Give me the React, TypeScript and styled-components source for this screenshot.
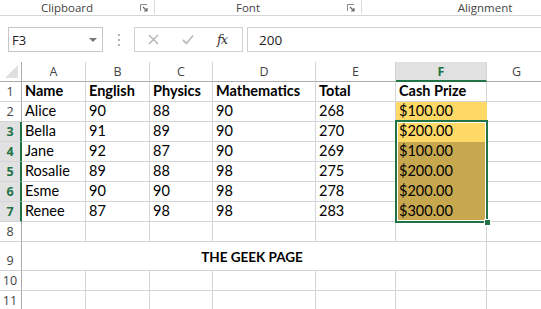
import React from 'react';
import styled, { createGlobalStyle } from 'styled-components';

const GREEN = '#217346';
const GRID = '#d4d4d4';
const HEAD_LINE = '#ababab';

const Global = createGlobalStyle`
  html, body { margin: 0; padding: 0; background: #fff; overflow: hidden; }
  #root { width: 541px; height: 309px; overflow: hidden; }
`;

const Page = styled.div`
  width: 541px;
  height: 309px;
  overflow: hidden;
  display: flex;
  flex-direction: column;
  background: #fff;
  font-family: "Open Sans", "Noto Sans", sans-serif;
`;

/* ---------- Ribbon ---------- */
const Ribbon = styled.div`
  display: flex;
  height: 16px;
  flex-shrink: 0;
  box-sizing: border-box;
  border-bottom: 1px solid #d5d5d5;
`;

const Group = styled.div<{ $w: number }>`
  width: ${(p) => p.$w}px;
  flex-shrink: 0;
  display: flex;
  height: 14px;
  box-sizing: border-box;
  border-right: 1px solid #dadada;
`;

const GroupLabel = styled.div`
  flex: 1;
  text-align: center;
  font-size: 11.5px;
  line-height: 15px;
  color: #444;
  margin-top: 0px;
`;

const Launcher = styled.div`
  width: 20px;
  display: flex;
  align-items: center;
  justify-content: center;
  padding-top: 2px;
`;

const LauncherIcon = () => (
  <svg width="8" height="8" viewBox="0 0 8 8">
    <path d="M0.5 7V0.5H7" fill="none" stroke="#8a8a8a" strokeWidth="1" />
    <path d="M3 3L7 7M4 7H7V4" fill="none" stroke="#6a6a6a" strokeWidth="1.2" />
  </svg>
);

/* ---------- Formula bar ---------- */
const FormulaBar = styled.div`
  display: flex;
  align-items: stretch;
  height: 25px;
  flex-shrink: 0;
  margin: 11px 0 10px 8px;
`;

const NameBox = styled.div`
  width: 95px;
  box-sizing: border-box;
  border: 1px solid #c6c6c6;
  display: flex;
  align-items: center;
  justify-content: space-between;
  padding: 0 5px 0 3px;
  font-size: 13px;
  color: #222;
`;

const DropArrow = styled.span`
  width: 0;
  height: 0;
  border-left: 4px solid transparent;
  border-right: 4px solid transparent;
  border-top: 4px solid #777;
`;

const Dots = styled.div`
  width: 31px;
  display: flex;
  flex-direction: column;
  align-items: center;
  justify-content: center;
  gap: 3px;
`;

const Dot = styled.span`
  width: 2px;
  height: 2px;
  background: #b4b4b4;
`;

const FxBox = styled.div`
  width: 109px;
  box-sizing: border-box;
  border: 1px solid #d0d0d0;
  display: flex;
  align-items: center;
  padding-left: 13px;
  gap: 23px;
`;

const Fx = styled.span`
  font-family: "DejaVu Serif", "Liberation Serif", serif;
  font-style: italic;
  font-size: 13px;
  color: #333;
  letter-spacing: -1px;
`;

const FormulaInput = styled.div`
  flex: 1;
  margin-left: 4px;
  box-sizing: border-box;
  border: 1px solid #d0d0d0;
  border-right: none;
  display: flex;
  align-items: center;
  padding-left: 11px;
  font-size: 13.5px;
  color: #222;
`;

const XIcon = () => (
  <svg width="11" height="11" viewBox="0 0 11 11">
    <path d="M1 1L10 10M10 1L1 10" stroke="#b0b0b0" strokeWidth="1.3" />
  </svg>
);

const CheckIcon = () => (
  <svg width="12" height="11" viewBox="0 0 12 11">
    <path d="M1 6L4.5 9.5L11 1.5" fill="none" stroke="#bcbcbc" strokeWidth="1.8" />
  </svg>
);

/* ---------- Sheet ---------- */
const Sheet = styled.div`
  position: relative;
  display: grid;
  grid-template-columns: 22px 64px 64px 63px 103px 80px 91px 60px;
  grid-template-rows: 20px repeat(8, 20px) 29px 20px 20px;
  flex-shrink: 0;
`;

const Corner = styled.div`
  position: relative;
  box-sizing: border-box;
  border-right: 1px solid ${HEAD_LINE};
  border-bottom: 1px solid ${HEAD_LINE};
  &::after {
    content: '';
    position: absolute;
    right: 3px;
    bottom: 3px;
    width: 13px;
    height: 13px;
    background: #dfdfdf;
    clip-path: polygon(100% 0, 100% 100%, 0 100%);
  }
`;

const ColHead = styled.div<{ $sel?: boolean }>`
  box-sizing: border-box;
  border-right: 1px solid ${GRID};
  border-bottom: ${(p) => (p.$sel ? `2px solid ${GREEN}` : `1px solid ${HEAD_LINE}`)};
  background: ${(p) => (p.$sel ? '#e1e1e1' : '#fff')};
  color: ${(p) => (p.$sel ? GREEN : '#444')};
  font-weight: ${(p) => (p.$sel ? 700 : 400)};
  font-size: 12.5px;
  display: flex;
  align-items: center;
  justify-content: center;
  padding-top: ${(p) => (p.$sel ? 1 : 0)}px;
`;

const RowHead = styled.div<{ $sel?: boolean }>`
  box-sizing: border-box;
  border-right: ${(p) => (p.$sel ? `2px solid ${GREEN}` : `1px solid ${HEAD_LINE}`)};
  border-bottom: 1px solid ${GRID};
  background: ${(p) => (p.$sel ? '#e1e1e1' : '#fff')};
  color: ${(p) => (p.$sel ? GREEN : '#444')};
  font-weight: ${(p) => (p.$sel ? 700 : 400)};
  font-size: 12.5px;
  display: flex;
  align-items: flex-end;
  justify-content: center;
  padding: 0 ${(p) => (p.$sel ? 0 : 1)}px 1px 0;
  line-height: 17px;
`;

const Cell = styled.div<{ $fill?: string; $bold?: boolean }>`
  box-sizing: border-box;
  border-right: 1px solid ${(p) => p.$fill || GRID};
  border-bottom: 1px solid ${(p) => p.$fill || GRID};
  background: ${(p) => p.$fill || '#fff'};
  font-family: Lato, "Open Sans", sans-serif;
  font-size: 14.5px;
  font-weight: ${(p) => (p.$bold ? 700 : 400)};
  color: #000;
  display: flex;
  align-items: flex-end;
  padding: 0 0 1px 3px;
  line-height: 18px;
  white-space: nowrap;
  overflow: hidden;
`;

const MergedCell = styled.div`
  grid-column: 2 / 8;
  box-sizing: border-box;
  border-right: 1px solid ${GRID};
  border-bottom: 1px solid ${GRID};
  font-family: Lato, "Open Sans", sans-serif;
  font-size: 13.5px;
  font-weight: 700;
  display: flex;
  align-items: center;
  justify-content: center;
  padding: 2px 4px 0 0;
`;

const Selection = styled.div`
  position: absolute;
  left: 395px;
  top: 58px;
  width: 93px;
  height: 103px;
  box-sizing: border-box;
  border: 2px solid ${GREEN};
  box-shadow: inset 0 0 0 1px #fff;
  pointer-events: none;
`;

const FillHandle = styled.div`
  position: absolute;
  left: 484px;
  top: 157px;
  width: 7px;
  height: 7px;
  box-sizing: border-box;
  background: ${GREEN};
  border: 1px solid #fff;
`;

const LIGHT = '#ffd966';
const DARK = '#c8a84f';

const cols = ['A', 'B', 'C', 'D', 'E', 'F', 'G'];

const rows: string[][] = [
  ['Name', 'English', 'Physics', 'Mathematics', 'Total', 'Cash Prize'],
  ['Alice', '90', '88', '90', '268', '$100.00'],
  ['Bella', '91', '89', '90', '270', '$200.00'],
  ['Jane', '92', '87', '90', '269', '$100.00'],
  ['Rosalie', '89', '88', '98', '275', '$200.00'],
  ['Esme', '90', '90', '98', '278', '$200.00'],
  ['Renee', '87', '98', '98', '283', '$300.00'],
];

const fillFor = (r: number, c: number): string | undefined => {
  if (c !== 5) return undefined;
  if (r === 2 || r === 3) return LIGHT;
  if (r >= 4 && r <= 7) return DARK;
  return undefined;
};

export default function App() {
  return (
    <Page>
      <Global />
      <Ribbon>
        <Group $w={155}>
          <GroupLabel>Clipboard</GroupLabel>
          <Launcher>
            <LauncherIcon />
          </Launcher>
        </Group>
        <Group $w={207}>
          <GroupLabel>Font</GroupLabel>
          <Launcher>
            <LauncherIcon />
          </Launcher>
        </Group>
        <Group $w={247}>
          <GroupLabel>Alignment</GroupLabel>
        </Group>
      </Ribbon>

      <FormulaBar>
        <NameBox>
          <span>F3</span>
          <DropArrow />
        </NameBox>
        <Dots>
          <Dot />
          <Dot />
          <Dot />
        </Dots>
        <FxBox>
          <XIcon />
          <CheckIcon />
          <Fx>fx</Fx>
        </FxBox>
        <FormulaInput>200</FormulaInput>
      </FormulaBar>

      <Sheet>
        <Corner />
        {cols.map((c) => (
          <ColHead key={c} $sel={c === 'F'}>
            {c}
          </ColHead>
        ))}
        {Array.from({ length: 11 }, (_, i) => {
          const r = i + 1;
          const sel = r >= 3 && r <= 7;
          if (r === 9) {
            return (
              <React.Fragment key={r}>
                <RowHead>{r}</RowHead>
                <MergedCell>THE GEEK PAGE</MergedCell>
                <Cell />
              </React.Fragment>
            );
          }
          const data = rows[r - 1] || [];
          return (
            <React.Fragment key={r}>
              <RowHead $sel={sel}>{r}</RowHead>
              {cols.map((c, ci) => (
                <Cell key={c} $fill={fillFor(r, ci)} $bold={r === 1}>
                  {data[ci] || ''}
                </Cell>
              ))}
            </React.Fragment>
          );
        })}
        <Selection />
        <FillHandle />
      </Sheet>
    </Page>
  );
}
